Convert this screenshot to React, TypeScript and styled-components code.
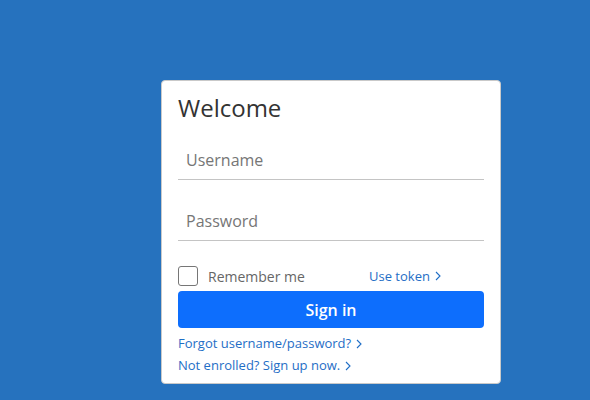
import React from 'react';
import styled, { createGlobalStyle } from 'styled-components';

const GlobalStyle = createGlobalStyle`
  * {
    box-sizing: border-box;
  }

  html, body {
    margin: 0;
    padding: 0;
    height: 100%;
  }

  body {
    background: #2672be;
    font-family: 'Open Sans', 'Noto Sans', sans-serif;
  }
`;

const Page = styled.div`
  padding: 80px 0 0 161px;
`;

const Card = styled.form`
  display: flex;
  flex-direction: column;
  width: 340px;
  background: #fff;
  border: 1px solid #c9c9c9;
  border-radius: 4px;
  padding: 11px 16px 8px;
`;

const Title = styled.h1`
  margin: 0 0 16px;
  font-size: 24px;
  font-weight: 400;
  line-height: 32px;
  color: #333;
`;

const Input = styled.input`
  display: block;
  width: 100%;
  height: 40px;
  border: 0;
  border-bottom: 1px solid #c4c4c4;
  padding: 0 8px;
  margin: 0 0 21px;
  font-family: inherit;
  font-size: 16px;
  color: #333;
  outline: none;

  &::placeholder {
    color: #767676;
  }
`;

const OptionsRow = styled.div`
  display: flex;
  align-items: center;
  margin-top: 4px;
  height: 20px;
`;

const CheckLabel = styled.label`
  display: flex;
  align-items: center;
  gap: 10px;
  width: 191px;
  font-size: 14px;
  color: #666;
`;

const Box = styled.span`
  width: 20px;
  height: 20px;
  border: 1px solid #767676;
  border-radius: 3px;
`;

const Link = styled.a<{ $size?: number }>`
  display: inline-flex;
  align-items: center;
  gap: 5px;
  font-size: ${(p) => p.$size ?? 13}px;
  color: #1f6ec6;
  text-decoration: none;
  cursor: pointer;
`;

const Chevron = () => (
  <svg width="6" height="10" viewBox="0 0 6 10" fill="none">
    <path d="M1 1l4 4-4 4" stroke="currentColor" strokeWidth="1.1" />
  </svg>
);

const Button = styled.button`
  display: block;
  width: 100%;
  height: 37px;
  margin-top: 5px;
  border: 0;
  border-radius: 4px;
  background: #0d6efd;
  color: #fff;
  font-family: inherit;
  font-size: 16px;
  font-weight: 600;
  cursor: pointer;
`;

const Links = styled.div`
  display: flex;
  flex-direction: column;
  align-items: flex-start;
  gap: 3px;
  margin-top: 6px;
  line-height: 19px;
`;

const App = () => (
  <>
    <GlobalStyle />
    <Page>
      <Card onSubmit={(e) => e.preventDefault()}>
        <Title>Welcome</Title>
        <Input placeholder="Username" />
        <Input placeholder="Password" type="password" />
        <OptionsRow>
          <CheckLabel>
            <Box />
            Remember me
          </CheckLabel>
          <Link>
            Use token <Chevron />
          </Link>
        </OptionsRow>
        <Button type="submit">Sign in</Button>
        <Links>
          <Link>
            Forgot username/password? <Chevron />
          </Link>
          <Link>
            Not enrolled? Sign up now. <Chevron />
          </Link>
        </Links>
      </Card>
    </Page>
  </>
);

export default App;
